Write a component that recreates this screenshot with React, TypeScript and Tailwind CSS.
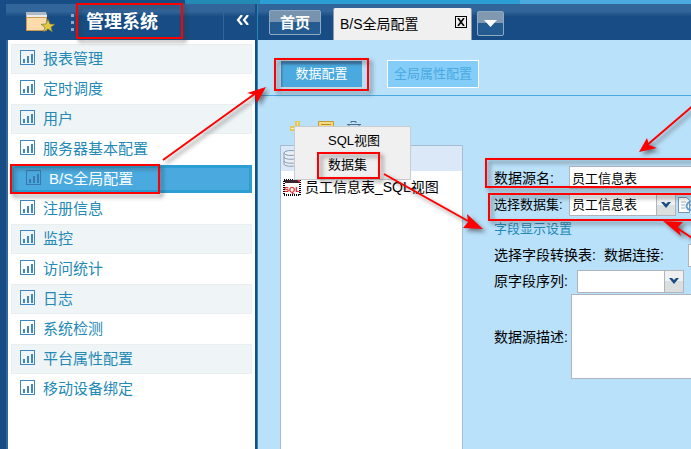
import React from "react";

const menu = [
  "报表管理",
  "定时调度",
  "用户",
  "服务器基本配置",
  "B/S全局配置",
  "注册信息",
  "监控",
  "访问统计",
  "日志",
  "系统检测",
  "平台属性配置",
  "移动设备绑定",
];

function ChartIcon({ active }: { active: boolean }) {
  return (
    <svg width="15" height="15" viewBox="0 0 15 15" className="mb-[3px] shrink-0" fill={active ? "#3a78ad" : "#4187bf"}>
      <path d="M0 0h15v15H0zM1 1v13h13V1z" fillRule="evenodd" />
      <path d="M3 9h2v4H3zM7 6h2v7H7zM11 4h2v9h-2z" />
    </svg>
  );
}

function FolderIcon() {
  return (
    <svg width="30" height="20" viewBox="0 0 30 20" className="shrink-0">
      <path d="M0 0h20l1 3v3H0z" fill="#aeb9c3" />
      <path d="M1 3h20v2H1z" fill="#e8ecef" />
      <path d="M0 5h21v14H0z" fill="#d09a4e" />
      <path d="M1 6h19v12H1z" fill="#fbdcaa" />
      <path d="m22 7 2 5 5 .3-4 3 1.500 4.700-4.500-3-4.500 3L19 15.300l-4-3 5-.3z" fill="#e6c93c" stroke="#5d6b4c" strokeWidth=".6" />
    </svg>
  );
}

function ArrowBox() {
  return (
    <span className="pointer-events-none absolute inset-y-px right-px flex w-[19px] items-center justify-center border-l border-[#b0b5bd] bg-linear-to-b from-[#f0f0f0] from-50% to-[#dcdfe0] to-50%">
      <svg width="10" height="6" viewBox="0 0 10 6">
        <path d="M0 0h3l2 2 2-2h3L5 6z" fill="#174d84" />
      </svg>
    </span>
  );
}

function SqlIcon() {
  return (
    <svg width="18" height="17" viewBox="0 0 18 17" className="shrink-0">
      <rect x="1" y="1" width="16" height="15" fill="#fff" stroke="#000" strokeWidth="2" strokeDasharray="1 1" />
      <path d="M2 1h14v3H2z" fill="#3b2430" />
      <path d="M14 1h3v3z" fill="#e33" />
      <text x="9" y="13" textAnchor="middle" fontSize="8" fontWeight="700" fill="#e01010" fontFamily="Liberation Sans, sans-serif">
        SQL
      </text>
    </svg>
  );
}

function Annotations() {
  return (
    <svg width="691" height="449" viewBox="0 0 691 449" className="pointer-events-none absolute top-0 left-0 z-20">
      <defs>
        <filter id="shade" filterUnits="userSpaceOnUse" x="0" y="0" width="691" height="449" colorInterpolationFilters="sRGB">
          <feDropShadow dx="3" dy="3" stdDeviation="2" floodColor="#333" floodOpacity=".6" />
        </filter>
      </defs>
      <g filter="url(#shade)" fill="none" stroke="#ff0000" strokeWidth="2">
        <rect x="77" y="4" width="105" height="34" />
        <rect x="11" y="165" width="148" height="28" />
        <rect x="275" y="59" width="93" height="31" />
        <rect x="318" y="153" width="61" height="25" />
        <rect x="486" y="159" width="230" height="28" />
        <rect x="489" y="194" width="230" height="26" />
      </g>
      <g filter="url(#shade)" fill="#ff0000" stroke="#ff0000">
        <path d="M163 160 256 93M384 174l84 47M695 104l-49 42M695 240l-18-12" strokeWidth="2" fill="none" />
        <path d="m266 87-9 16-2-8-8-2zM483 229l-20-1 5-6-1-8zM639 152l8-14 2 7 8 3zM663 221l20 1-5 5 3 9z" stroke="none" />
      </g>
    </svg>
  );
}

export default function App() {
  return (
    <div className="relative flex h-screen flex-col overflow-hidden bg-[#174d84] font-['Liberation_Sans','Noto_Sans_CJK_SC',sans-serif] text-black">
      <div className="flex h-1 shrink-0">
        <div className="w-[185px] bg-[#174d84]" />
        <div className="w-[75px] bg-[#2389b5]" />
        <div className="w-[260px] bg-[#2b9fd3]" />
        <div className="flex-1 bg-[#4aaae0]" />
      </div>
      <div className="flex min-h-0 flex-1">
        <aside className="ml-1.5 flex w-[249px] shrink-0 flex-col">
          <header className="flex h-9 shrink-0 items-center bg-linear-to-b from-[#32659a] from-20% to-[#174d84] to-35% pl-5 text-white">
            <FolderIcon />
            <svg width="3" height="17" viewBox="0 0 3 17" className="ml-[15px] shrink-0" fill="#8fa9c3">
              <path d="M0 0h3v3H0zM0 7h3v3H0zM0 14h3v3H0z" />
            </svg>
            <h1 className="ml-3 text-lg leading-6 font-bold">管理系统</h1>
            <button aria-label="收起" className="ml-auto flex h-full w-8 items-center justify-center border-l border-[#32659a] pb-1 pl-1.5">
              <svg width="13" height="10" viewBox="0 0 13 10" fill="none" stroke="#fff" strokeWidth="2.200">
                <path d="M6 0 2 5l4 5M12 0 8 5l4 5" />
              </svg>
            </button>
          </header>
          <nav className="flex-1 border-l-2 border-[#32659a] bg-white px-[3px] pt-1">
            {menu.map((label, i) => {
              const active = i === 4;
              return (
                <a
                  key={label}
                  href="#"
                  className={
                    active
                      ? "flex h-[30px] items-center gap-2 border-y border-white bg-[#4aaae0] pl-[15px] text-[15px] leading-5 text-white shadow-[inset_0_0_0_3px_#2b9fd3]"
                      : i % 2 === 0
                        ? "flex h-[30px] items-center gap-2 border border-[#e9eef1] bg-[#eff4f7] pl-2 text-[15px] leading-5 text-[#2389b5]"
                        : "flex h-[30px] items-center gap-2 pl-[9px] text-[15px] leading-5 text-[#2389b5]"
                  }
                >
                  <ChartIcon active={active} />
                  <span>{label}</span>
                </a>
              );
            })}
          </nav>
        </aside>
        <div className="w-[3px] shrink-0 border-r border-[#2389b5] bg-[#174d84]" />
        <main className="flex min-w-0 flex-1 flex-col bg-[#b9e1fa]">
          <div className="flex h-9 shrink-0 items-end bg-linear-to-b from-[#32659a] from-20% to-[#174d84] to-35%">
            <button className="mb-[5px] ml-[11px] h-[25px] w-[52px] rounded-xs border border-[#8fa9c3] bg-linear-to-b from-[#7893ae] from-50% to-[#245c91] to-50% text-[15px] leading-5 font-bold text-white">
              首页
            </button>
            <div className="ml-3 flex h-8 w-[139px] items-center justify-between rounded-t-xs border-x border-[#8f9aa5] bg-[#f0f0f0] pr-1 pl-1.5">
              <span className="text-sm leading-5">B/S全局配置</span>
              <button aria-label="关闭" className="mb-1 flex size-3 items-center justify-center border border-black">
                <svg width="8" height="8" viewBox="0 0 8 8" stroke="#000" strokeWidth="1.600">
                  <path d="m1 0 6 8M7 0 1 8" />
                </svg>
              </button>
            </div>
            <button aria-label="更多标签" className="mb-1 ml-[5px] flex h-[25px] w-[27px] items-center justify-center rounded-xs border border-[#8fa9c3] bg-linear-to-b from-[#8199b0] from-50% to-[#245c91] to-50%">
              <svg width="13" height="7" viewBox="0 0 13 7">
                <path d="M0 0h13L6.500 7z" fill="#fff" />
              </svg>
            </button>
          </div>
          <div className="flex h-14 shrink-0 items-center gap-6 border-b border-[#4aaae0] pt-4 pb-1 pl-[22px]">
            <button className="h-7 w-[83px] border border-[#cfd6dc] bg-[#4aaae0] text-[13px] leading-5 text-white shadow-[inset_1px_3px_2px_#397caf]">
              数据配置
            </button>
            <button className="h-7 w-[92px] border border-white bg-[#84cdf9] text-[13px] leading-5 text-[#4aaae0]">
              全局属性配置
            </button>
          </div>
          <div className="flex min-h-0 flex-1">
            <section className="relative ml-[22px] flex w-[183px] shrink-0 flex-col">
              <div className="flex h-[49px] shrink-0 items-end gap-3 pb-2 pl-2.5">
                <svg width="16" height="16" viewBox="0 0 16 16" fill="#e6c657">
                  <path d="M5 0h5v5h5v5h-5v5H5v-5H0V5h5z" />
                  <path d="M7 1h1v6H1v1h13V7H8z" fill="#fff3c0" />
                </svg>
                <svg width="16" height="16" viewBox="0 0 16 16">
                  <path d="M.5.5h15v15H.5z" fill="#f4dc83" stroke="#c69a35" />
                  <path d="M3 3h10v1H3z" fill="#b88a2a" />
                </svg>
                <svg width="16" height="16" viewBox="0 0 16 16" fill="none" stroke="#526d86">
                  <path d="M5 2V.5h5V2M1 3.500h14M3 4v11.500h10V4" />
                </svg>
              </div>
              <div className="flex-1 border-x border-t border-[#a3bdd6] bg-white">
                <div className="flex h-[25px] items-center bg-[#dbe8f8] pl-0.5">
                  <svg width="16" height="17" viewBox="0 0 16 17" fill="#e8eef4" stroke="#899eb4">
                    <path d="M1 3v11c0 3 14 3 14 0V3M1 7c0 3 14 3 14 0M1 11c0 3 14 3 14 0" />
                    <ellipse cx="8" cy="3" rx="7" ry="2.500" />
                  </svg>
                </div>
                <div className="flex h-8 items-center gap-1 pl-0.5 text-sm leading-5 whitespace-nowrap">
                  <SqlIcon />
                  <span>员工信息表_SQL视图</span>
                </div>
              </div>
              <div role="menu" className="absolute top-[30px] left-3.5 z-10 flex w-[117px] flex-col border border-[#c8ccd0] bg-[#f0f0f0] pt-0.5 pb-0.5 pl-[33px] text-[13px] leading-5">
                <button role="menuitem" className="h-6 text-left">SQL视图</button>
                <button role="menuitem" className="h-6 text-left">数据集</button>
              </div>
            </section>
            <form className="ml-[31px] min-w-0 flex-1 overflow-hidden pt-[70px] text-sm leading-5 whitespace-nowrap">
              <div className="flex h-[23px] items-center">
                <label htmlFor="name" className="w-[75px] shrink-0">数据源名:</label>
                <input id="name" defaultValue="员工信息表" className="h-[23px] w-[160px] shrink-0 border border-[#b0b5bd] bg-white px-0.5 text-[13px] leading-5" />
              </div>
              <div className="mt-1 flex h-6 items-center">
                <label htmlFor="dataset" className="w-[75px] shrink-0 text-[13px]">选择数据集:</label>
                <div className="relative shrink-0">
                  <select id="dataset" className="block h-[22px] w-[107px] appearance-none border border-[#b0b5bd] bg-white px-0.5 text-[13px] leading-5">
                    <option>员工信息表</option>
                  </select>
                  <ArrowBox />
                </div>
                <svg width="17" height="16" viewBox="0 0 17 16" className="ml-0.5 shrink-0">
                  <path d="M.5.5h8l3 3v12H.5z" fill="#fff" stroke="#7e93a9" />
                  <path d="M3 5h5M3 8h4M3 11h4" stroke="#9db0c2" />
                  <path d="M16 5c-6-3-11 6-4 8l4-1M12 8h5" fill="none" stroke="#6b9dc4" strokeWidth="2" />
                </svg>
              </div>
              <h2 className="h-[25px] text-[13px] leading-6 text-[#2389b5]">字段显示设置</h2>
              <div className="flex h-[26px] items-center">
                <span className="w-[110px] shrink-0">选择字段转换表:</span>
                <label htmlFor="connection" className="w-[84px] shrink-0">数据连接:</label>
                <input id="connection" className="h-[23px] w-[110px] shrink-0 border border-[#b0b5bd] bg-white" />
              </div>
              <div className="flex h-[26px] items-center">
                <label htmlFor="sequence" className="w-[83px] shrink-0">原字段序列:</label>
                <div className="relative shrink-0">
                  <select id="sequence" className="block h-[23px] w-[107px] appearance-none border border-[#b0b5bd] bg-white px-0.5">
                    <option></option>
                  </select>
                  <ArrowBox />
                </div>
              </div>
              <div className="flex items-center">
                <label htmlFor="description" className="w-[77px] shrink-0">数据源描述:</label>
                <textarea id="description" className="block h-[85px] w-[160px] shrink-0 resize-none border border-[#b0b5bd] bg-white" />
              </div>
            </form>
          </div>
        </main>
      </div>
      <Annotations />
    </div>
  );
}
